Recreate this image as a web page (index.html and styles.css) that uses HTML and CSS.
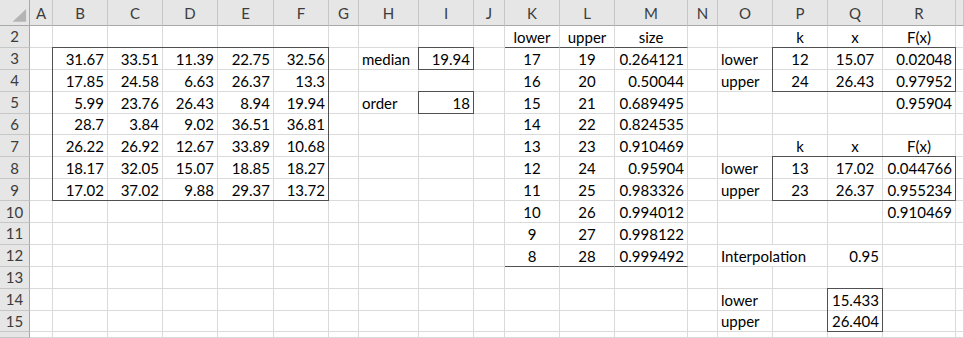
FILE: index.html
```html
<!DOCTYPE html>
<html>
<head>
<meta charset="utf-8">
<link rel="stylesheet" href="styles.css">
</head>
<body>
<div class="sheet">
  <div class="cells">
    <div class="c corner"><svg class="tri" width="30" height="26" viewBox="0 0 30 26"><polygon points="13,23 27,23 27,10" fill="#b4b4b4"/></svg></div><div class="c ch">A</div><div class="c ch">B</div><div class="c ch">C</div><div class="c ch">D</div><div class="c ch">E</div><div class="c ch">F</div><div class="c ch">G</div><div class="c ch">H</div><div class="c ch">I</div><div class="c ch">J</div><div class="c ch">K</div><div class="c ch">L</div><div class="c ch">M</div><div class="c ch">N</div><div class="c ch">O</div><div class="c ch">P</div><div class="c ch">Q</div><div class="c ch">R</div><div class="c ch"></div>

    <div class="c rh">2</div><div class="c"></div><div class="c"></div><div class="c"></div><div class="c"></div><div class="c"></div><div class="c"></div><div class="c"></div><div class="c"></div><div class="c"></div><div class="c"></div><div class="c m ub">lower</div><div class="c m ub">upper</div><div class="c m ub">size</div><div class="c"></div><div class="c"></div><div class="c m">k</div><div class="c m">x</div><div class="c m">F(x)</div><div class="c"></div>

    <div class="c rh">3</div><div class="c"></div><div class="c r">31.67</div><div class="c r">33.51</div><div class="c r">11.39</div><div class="c r">22.75</div><div class="c r">32.56</div><div class="c"></div><div class="c">median</div><div class="c r">19.94</div><div class="c"></div><div class="c m">17</div><div class="c m">19</div><div class="c r">0.264121</div><div class="c"></div><div class="c">lower</div><div class="c m">12</div><div class="c m">15.07</div><div class="c r">0.02048</div><div class="c"></div>

    <div class="c rh">4</div><div class="c"></div><div class="c r">17.85</div><div class="c r">24.58</div><div class="c r">6.63</div><div class="c r">26.37</div><div class="c r">13.3</div><div class="c"></div><div class="c"></div><div class="c"></div><div class="c"></div><div class="c m">16</div><div class="c m">20</div><div class="c r">0.50044</div><div class="c"></div><div class="c">upper</div><div class="c m">24</div><div class="c m">26.43</div><div class="c r">0.97952</div><div class="c"></div>

    <div class="c rh">5</div><div class="c"></div><div class="c r">5.99</div><div class="c r">23.76</div><div class="c r">26.43</div><div class="c r">8.94</div><div class="c r">19.94</div><div class="c"></div><div class="c">order</div><div class="c r">18</div><div class="c"></div><div class="c m">15</div><div class="c m">21</div><div class="c r">0.689495</div><div class="c"></div><div class="c"></div><div class="c"></div><div class="c"></div><div class="c r">0.95904</div><div class="c"></div>

    <div class="c rh">6</div><div class="c"></div><div class="c r">28.7</div><div class="c r">3.84</div><div class="c r">9.02</div><div class="c r">36.51</div><div class="c r">36.81</div><div class="c"></div><div class="c"></div><div class="c"></div><div class="c"></div><div class="c m">14</div><div class="c m">22</div><div class="c r">0.824535</div><div class="c"></div><div class="c"></div><div class="c"></div><div class="c"></div><div class="c"></div><div class="c"></div>

    <div class="c rh">7</div><div class="c"></div><div class="c r">26.22</div><div class="c r">26.92</div><div class="c r">12.67</div><div class="c r">33.89</div><div class="c r">10.68</div><div class="c"></div><div class="c"></div><div class="c"></div><div class="c"></div><div class="c m">13</div><div class="c m">23</div><div class="c r">0.910469</div><div class="c"></div><div class="c"></div><div class="c m">k</div><div class="c m">x</div><div class="c m">F(x)</div><div class="c"></div>

    <div class="c rh">8</div><div class="c"></div><div class="c r">18.17</div><div class="c r">32.05</div><div class="c r">15.07</div><div class="c r">18.85</div><div class="c r">18.27</div><div class="c"></div><div class="c"></div><div class="c"></div><div class="c"></div><div class="c m">12</div><div class="c m">24</div><div class="c r">0.95904</div><div class="c"></div><div class="c">lower</div><div class="c m">13</div><div class="c m">17.02</div><div class="c r">0.044766</div><div class="c"></div>

    <div class="c rh">9</div><div class="c"></div><div class="c r">17.02</div><div class="c r">37.02</div><div class="c r">9.88</div><div class="c r">29.37</div><div class="c r">13.72</div><div class="c"></div><div class="c"></div><div class="c"></div><div class="c"></div><div class="c m">11</div><div class="c m">25</div><div class="c r">0.983326</div><div class="c"></div><div class="c">upper</div><div class="c m">23</div><div class="c m">26.37</div><div class="c r">0.955234</div><div class="c"></div>

    <div class="c rh">10</div><div class="c"></div><div class="c"></div><div class="c"></div><div class="c"></div><div class="c"></div><div class="c"></div><div class="c"></div><div class="c"></div><div class="c"></div><div class="c"></div><div class="c m">10</div><div class="c m">26</div><div class="c r">0.994012</div><div class="c"></div><div class="c"></div><div class="c"></div><div class="c"></div><div class="c r">0.910469</div><div class="c"></div>

    <div class="c rh">11</div><div class="c"></div><div class="c"></div><div class="c"></div><div class="c"></div><div class="c"></div><div class="c"></div><div class="c"></div><div class="c"></div><div class="c"></div><div class="c"></div><div class="c m">9</div><div class="c m">27</div><div class="c r">0.998122</div><div class="c"></div><div class="c"></div><div class="c"></div><div class="c"></div><div class="c"></div><div class="c"></div>

    <div class="c rh">12</div><div class="c"></div><div class="c"></div><div class="c"></div><div class="c"></div><div class="c"></div><div class="c"></div><div class="c"></div><div class="c"></div><div class="c"></div><div class="c"></div><div class="c m ub">8</div><div class="c m ub">28</div><div class="c r ub">0.999492</div><div class="c"></div><div class="c span2">Interpolation</div><div class="c r">0.95</div><div class="c"></div><div class="c"></div>

    <div class="c rh">13</div><div class="c"></div><div class="c"></div><div class="c"></div><div class="c"></div><div class="c"></div><div class="c"></div><div class="c"></div><div class="c"></div><div class="c"></div><div class="c"></div><div class="c"></div><div class="c"></div><div class="c"></div><div class="c"></div><div class="c"></div><div class="c"></div><div class="c"></div><div class="c"></div><div class="c"></div>

    <div class="c rh">14</div><div class="c"></div><div class="c"></div><div class="c"></div><div class="c"></div><div class="c"></div><div class="c"></div><div class="c"></div><div class="c"></div><div class="c"></div><div class="c"></div><div class="c"></div><div class="c"></div><div class="c"></div><div class="c"></div><div class="c">lower</div><div class="c"></div><div class="c r">15.433</div><div class="c"></div><div class="c"></div>

    <div class="c rh">15</div><div class="c"></div><div class="c"></div><div class="c"></div><div class="c"></div><div class="c"></div><div class="c"></div><div class="c"></div><div class="c"></div><div class="c"></div><div class="c"></div><div class="c"></div><div class="c"></div><div class="c"></div><div class="c"></div><div class="c">upper</div><div class="c"></div><div class="c r">26.404</div><div class="c"></div><div class="c"></div>

    <div class="c rh"></div><div class="c"></div><div class="c"></div><div class="c"></div><div class="c"></div><div class="c"></div><div class="c"></div><div class="c"></div><div class="c"></div><div class="c"></div><div class="c"></div><div class="c"></div><div class="c"></div><div class="c"></div><div class="c"></div><div class="c"></div><div class="c"></div><div class="c"></div><div class="c"></div><div class="c"></div>
  </div>
  <div class="boxes">
    <div class="box box-data"></div>
    <div class="box box-median"></div>
    <div class="box box-order"></div>
    <div class="box box-f1"></div>
    <div class="box box-f2"></div>
    <div class="box box-interp"></div>
  </div>
</div>
</body>
</html>
```

FILE: styles.css
```css
html, body {
  margin: 0;
  padding: 0;
  background: #ffffff;
}

.sheet {
  display: grid;
  width: 964px;
  height: 338px;
  overflow: hidden;
  font-family: Lato, "Open Sans", sans-serif;
  font-size: 15px;
  color: #000000;
}

.cells,
.boxes {
  grid-area: 1 / 1;
  display: grid;
  grid-template-columns: 30px 23px 55px 55px 55px 56px 55px 30px 60px 55px 31px 55px 55px 73px 30px 55px 55px 55px 73px 1fr;
  grid-template-rows: 26px repeat(14, 21.9px) 1fr;
}

.boxes {
  pointer-events: none;
}

.c {
  box-sizing: border-box;
  border-right: 1px solid #dadada;
  border-bottom: 1px solid #dadada;
  display: flex;
  align-items: flex-end;
  justify-content: flex-start;
  padding: 0 3px 1px 3px;
  white-space: nowrap;
  line-height: 18px;
  overflow: visible;
  min-width: 0;
}

.c.r { justify-content: flex-end; }
.c.m { justify-content: center; }
.c.ub { border-bottom-color: #505050; }
.c.span2 { grid-column: span 2; }

.c.ch {
  background: #e6e6e6;
  color: #3c3c3c;
  justify-content: center;
  align-items: center;
  padding: 0;
  border-right-color: #c6c6c6;
  border-bottom-color: #a8a8a8;
}

.c.rh {
  background: #e6e6e6;
  color: #3c3c3c;
  justify-content: center;
  align-items: center;
  padding: 0;
  border-right-color: #a8a8a8;
  border-bottom-color: #c6c6c6;
}

.c.corner {
  background: #e6e6e6;
  padding: 0;
  border-right-color: #a8a8a8;
  border-bottom-color: #a8a8a8;
}

.tri {
  display: block;
}

.box {
  border: 1px solid #505050;
  margin: -1px 0 0 -1px;
}

.box-data { grid-row: 3 / 10; grid-column: 3 / 8; }
.box-median { grid-row: 3 / 4; grid-column: 10 / 11; }
.box-order { grid-row: 5 / 6; grid-column: 10 / 11; }
.box-f1 { grid-row: 3 / 5; grid-column: 17 / 20; }
.box-f2 { grid-row: 8 / 10; grid-column: 17 / 20; }
.box-interp { grid-row: 14 / 16; grid-column: 18 / 19; }
```
